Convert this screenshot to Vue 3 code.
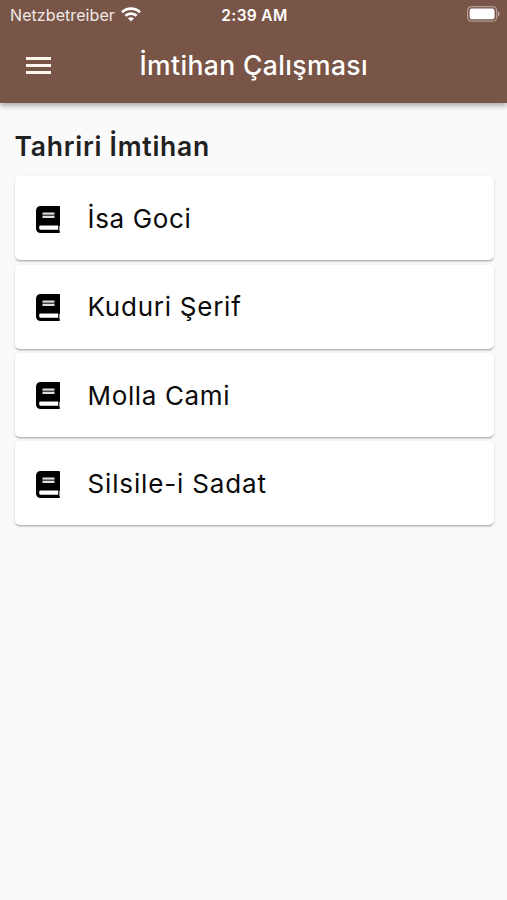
<script setup>
const books = [
  { name: 'İsa Goci', tracking: '0.65px' },
  { name: 'Kuduri Şerif', tracking: '0.75px' },
  { name: 'Molla Cami', tracking: '0.65px' },
  { name: 'Silsile-i Sadat', tracking: '0.85px' },
]
</script>

<template>
  <div class="screen">
    <header class="header">
      <div class="status">
        <div class="carrier">
          <span class="carrier-name">Netzbetreiber</span>
          <svg class="wifi" width="20" height="15" viewBox="0 0 20 15" fill="none" stroke="#fff" stroke-width="2.7">
            <path d="M1 5.2C6 .5 14 .5 19 5.2" />
            <path d="M4.3 8.8c3.3-3 8.1-3 11.4 0" />
            <path d="M10 14.4 6.9 11.3c1.8-1.5 4.4-1.5 6.2 0Z" fill="#fff" stroke="none" />
          </svg>
        </div>
        <span class="time">2:39 AM</span>
        <svg class="battery" width="33" height="16" viewBox="0 0 33 16">
          <rect x=".6" y=".6" width="29" height="14.6" rx="4" fill="none" stroke="#fff" stroke-opacity=".42" stroke-width="1.2" />
          <rect x="2.6" y="2.6" width="25" height="10.6" rx="2.3" fill="#fff" />
          <path d="M31 5.4c2.1.8 2.1 4.2 0 5Z" fill="#fff" fill-opacity=".5" />
        </svg>
      </div>
      <div class="toolbar">
        <svg class="menu" width="25" height="17" viewBox="0 0 25 17" fill="#fff6ee">
          <path d="M0 0h25v3H0zM0 7h25v3H0zM0 14h25v3H0z" />
        </svg>
        <h1 class="title">İmtihan Çalışması</h1>
      </div>
    </header>
    <main class="content">
      <h2 class="heading">Tahriri İmtihan</h2>
      <ul class="list">
        <li v-for="book in books" :key="book.name" class="card">
          <svg class="book" width="24" height="27" viewBox="0 0 24 27">
            <path d="M4.500 0H23a1 1 0 0 1 1 1v18.200l-.6 1v4.600l.6 1V26a1 1 0 0 1-1 1H4.500A4.500 4.500 0 0 1 0 22.500v-18A4.500 4.500 0 0 1 4.500 0Z" />
            <path d="M4.400 19.600h17.800v4.200H4.400a1.500 1.500 0 0 1-1.200-1.500v-1.200a1.500 1.500 0 0 1 1.200-1.500Z" fill="#fff" />
            <path d="M6.500 6.500h12v2.200h-12zM6.500 9.700h12v2.300h-12z" fill="#e0e0e0" />
            <path d="M6.500 8.700h12v1h-12z" fill="#555" />
          </svg>
          <span class="name" :style="{ letterSpacing: book.tracking }">{{ book.name }}</span>
        </li>
      </ul>
    </main>
  </div>
</template>

<style>
body {
  background: #fafafa;
}
</style>

<style scoped>
.screen {
  height: 900px;
  overflow: hidden;
  background: #fafafa;
  font-family: Inter, "Liberation Sans", sans-serif;
}
.header {
  height: 103.300px;
  background: #795548;
  color: #fff;
  box-shadow: 0 3px 5px rgba(0, 0, 0, .24), 0 1px 8px rgba(0, 0, 0, .12);
}
.status {
  display: grid;
  grid-template-columns: 1fr auto 1fr;
  align-items: center;
  height: 29px;
  padding: 0 8px 0 10px;
}
.carrier {
  display: flex;
  align-items: center;
  gap: 6px;
}
.carrier-name {
  font-size: 16px;
  line-height: 20px;
  letter-spacing: .08px;
  color: #f0e9e6;
}
.time {
  padding-top: 2px;
  font-size: 15.500px;
  font-weight: 600;
  line-height: 20px;
  letter-spacing: .35px;
}
.battery {
  justify-self: end;
  margin: 0 -1px 1px 0;
}
.toolbar {
  display: grid;
  grid-template-columns: 113.500px 1fr;
  align-items: center;
  height: 73px;
  padding-left: 26px;
}
.title {
  margin: 0 0 1px;
  font-size: 26.500px;
  font-weight: 500;
  line-height: 32px;
  letter-spacing: .38px;
  white-space: nowrap;
}
.content {
  padding: 26.700px 13.500px 0 14.500px;
}
.heading {
  margin: 0;
  font-size: 26.500px;
  font-weight: 600;
  line-height: 32px;
  letter-spacing: .75px;
  color: #212121;
}
.list {
  display: flex;
  flex-direction: column;
  gap: 4.300px;
  margin: 14.500px 0 0;
  padding: 0;
  list-style: none;
}
.card {
  display: flex;
  align-items: center;
  gap: 27.500px;
  box-sizing: border-box;
  height: 84px;
  padding-left: 21.500px;
  border-radius: 5px;
  background: #fff;
  box-shadow: 0 2px 2px -1px rgba(0, 0, 0, .25), 0 1px 3px rgba(0, 0, 0, .16);
}
.book {
  margin-top: 1.500px;
}
.name {
  padding-top: 1px;
  font-size: 26px;
  font-weight: 430;
  line-height: 32px;
  white-space: nowrap;
  color: #0a0a0a;
}
</style>
